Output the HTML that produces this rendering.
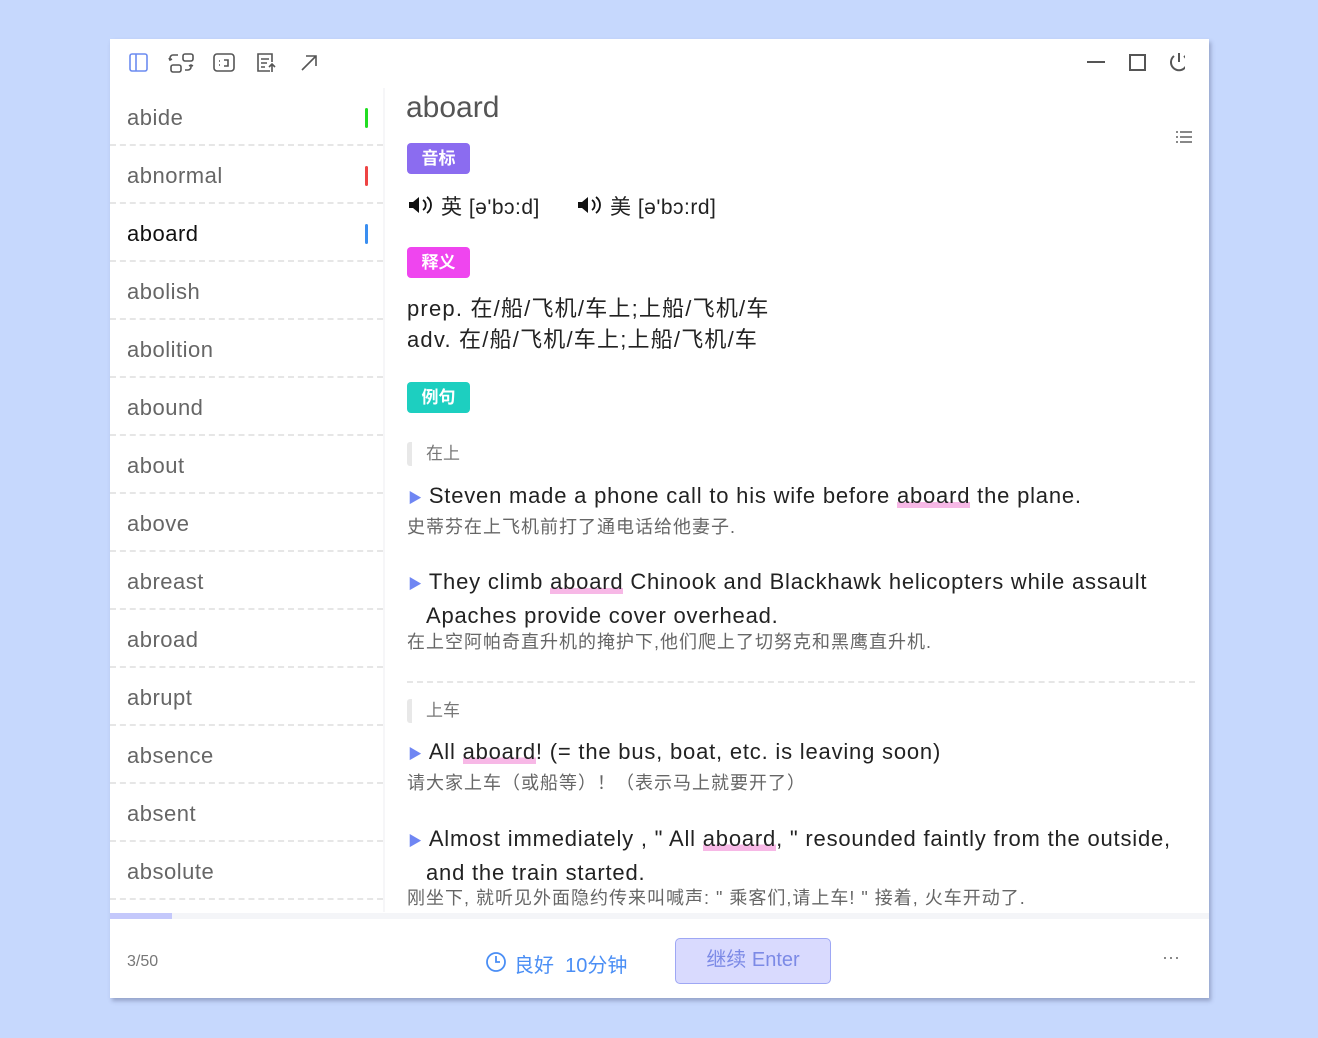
<!DOCTYPE html>
<html><head><meta charset="utf-8"><style>
*{margin:0;padding:0;box-sizing:border-box}
body{width:1318px;height:1038px;background:#c6d8fd;font-family:"Liberation Sans","Noto Sans CJK SC",sans-serif;position:relative;overflow:hidden}
.win{position:absolute;left:110px;top:39px;width:1099px;height:959px;background:#fff;box-shadow:2px 3px 4px rgba(90,100,140,.45)}
.a{position:absolute;white-space:nowrap}
.row{position:absolute;left:0;width:273px;height:58px;border-bottom:2px dashed #e6e6e6}
.row span{position:absolute;left:17px;top:17px;font-size:22px;color:#666;letter-spacing:0.5px}
.row i{position:absolute;left:255px;top:20px;width:3px;height:20px;border-radius:2px}
.badge{position:absolute;left:297px;width:63px;height:31px;border-radius:4px;color:#fff;font-size:17px;font-weight:bold;text-align:center;line-height:31px}
.en{font-size:22px;color:#222;letter-spacing:0.8px}
.zh{font-size:18px;color:#666;letter-spacing:1px}
.hl{background:linear-gradient(transparent 75%,#f7b8e6 75%)}
.tri{color:#6f86f3;font-size:14px;margin-right:6px}
.tag{position:absolute;left:297px;height:24px;border-left:5px solid #e8e8e8;border-radius:3px;padding-left:14px;font-size:17px;color:#777;line-height:24px}
.def{font-size:22px;color:#222;letter-spacing:1.2px}
</style></head><body>
<div class="win">
<svg class="a" style="left:18px;top:12px" width="200" height="24" fill="none" stroke-width="1.6">
<rect x="2" y="3" width="17" height="17" rx="2" stroke="#6c8cf0"/><line x1="8" y1="3" x2="8" y2="20" stroke="#6c8cf0"/>
<g stroke="#555"><rect x="55" y="3" width="10" height="7" rx="2"/><rect x="43" y="14" width="10" height="7" rx="2"/><path d="M50 4 h-5 a3 3 0 0 0 -3 3 v2 M41 7 l1 2 l2 -1"/><path d="M57 19 h3 a3 3 0 0 0 3 -3 v-2 M65 15 l-2 -1 l-2 1"/>
<rect x="86" y="3" width="20" height="17" rx="3"/><path d="M91 10 h1 M91 14 h1 M96 9 h4 v6 h-4"/>
<path d="M142 20 h-12 v-17 h14 v8 M133 8 h8 M133 12 h6 M133 16 h4 M144 21 v-8 M141 16 l3 -3 l3 3"/>
<path d="M174 19 l14 -14 M178 5 h10 v10"/></g></svg>
<svg class="a" style="left:975px;top:12px" width="100" height="24" fill="none" stroke="#555" stroke-width="2">
<line x1="2" y1="11" x2="20" y2="11"/><rect x="45" y="4" width="15" height="15"/>
<path d="M94 2 v9 M89 5 a8 8 0 1 0 10 0"/></svg>
<svg class="a" style="left:1066px;top:91px" width="16" height="14" fill="#888"><rect x="0" y="1" width="2" height="2"/><rect x="4" y="1" width="12" height="2"/><rect x="0" y="6" width="2" height="2"/><rect x="4" y="6" width="12" height="2"/><rect x="0" y="11" width="2" height="2"/><rect x="4" y="11" width="12" height="2"/></svg>
<div class="a" style="left:0;top:49px;width:273px;height:820px;overflow:hidden">
<div class="row" style="top:0"><span>abide</span><i style="background:#22dd22"></i></div>
<div class="row" style="top:58px"><span>abnormal</span><i style="background:#ee4444"></i></div>
<div class="row" style="top:116px"><span style="color:#111">aboard</span><i style="background:#3a8ef0"></i></div>
<div class="row" style="top:174px"><span>abolish</span></div>
<div class="row" style="top:232px"><span>abolition</span></div>
<div class="row" style="top:290px"><span>abound</span></div>
<div class="row" style="top:348px"><span>about</span></div>
<div class="row" style="top:406px"><span>above</span></div>
<div class="row" style="top:464px"><span>abreast</span></div>
<div class="row" style="top:522px"><span>abroad</span></div>
<div class="row" style="top:580px"><span>abrupt</span></div>
<div class="row" style="top:638px"><span>absence</span></div>
<div class="row" style="top:696px"><span>absent</span></div>
<div class="row" style="top:754px"><span>absolute</span></div>
</div>
<div class="a" style="left:273px;top:49px;width:2px;height:824px;background:#f6f6f8"></div>
<div class="a" style="left:296px;top:52px;font-size:30px;color:#555">aboard</div>
<div class="badge" style="top:104px;background:#8b6cf0">音标</div>
<svg class="a" style="left:298px;top:156px" width="26" height="20"><path d="M1 7 h4 l6 -5 v16 l-6 -5 h-4z" fill="#111"/><path d="M15 5 a6 6 0 0 1 0 10 M19 2 a10 10 0 0 1 0 16" fill="none" stroke="#111" stroke-width="1.8"/></svg>
<div class="a" style="left:331px;top:152px;font-size:21px;color:#222;letter-spacing:0.5px">英 [ə'bɔ:d]</div>
<svg class="a" style="left:467px;top:156px" width="26" height="20"><path d="M1 7 h4 l6 -5 v16 l-6 -5 h-4z" fill="#111"/><path d="M15 5 a6 6 0 0 1 0 10 M19 2 a10 10 0 0 1 0 16" fill="none" stroke="#111" stroke-width="1.8"/></svg>
<div class="a" style="left:500px;top:152px;font-size:21px;color:#222;letter-spacing:0.5px">美 [ə'bɔ:rd]</div>
<div class="badge" style="top:208px;background:#ef45ef">释义</div>
<div class="a def" style="left:297px;top:252px">prep. 在/船/飞机/车上;上船/飞机/车</div>
<div class="a def" style="left:297px;top:283px">adv. 在/船/飞机/车上;上船/飞机/车</div>
<div class="badge" style="top:343px;background:#1dcfc0">例句</div>
<div class="tag" style="top:403px">在上</div>
<div class="a en" style="left:298px;top:444px"><span class="tri">▶</span>Steven made a phone call to his wife before <span class="hl">aboard</span> the plane.</div>
<div class="a zh" style="left:297px;top:474px">史蒂芬在上飞机前打了通电话给他妻子.</div>
<div class="a en" style="left:298px;top:527px;line-height:31px"><span class="tri">▶</span>They climb <span class="hl">aboard</span> Chinook and Blackhawk helicopters while assault<br><span style="padding-left:18px">Apaches provide cover overhead.</span></div>
<div class="a zh" style="left:297px;top:589px">在上空阿帕奇直升机的掩护下,他们爬上了切努克和黑鹰直升机.</div>
<div class="a" style="left:297px;top:642px;width:788px;border-top:2px dashed #e6e6e6"></div>
<div class="tag" style="top:660px">上车</div>
<div class="a en" style="left:298px;top:700px"><span class="tri">▶</span>All <span class="hl">aboard</span>! (= the bus, boat, etc. is leaving soon)</div>
<div class="a zh" style="left:297px;top:730px">请大家上车（或船等）！（表示马上就要开了）</div>
<div class="a en" style="left:298px;top:784px;line-height:31px"><span class="tri">▶</span>Almost immediately , " All <span class="hl">aboard</span>, " resounded faintly from the outside,<br><span style="padding-left:18px">and the train started.</span></div>
<div class="a zh" style="left:297px;top:845px">刚坐下, 就听见外面隐约传来叫喊声: " 乘客们,请上车! " 接着, 火车开动了.</div>
<div class="a" style="left:0;top:874px;width:1099px;height:6px;background:#f4f5f8"></div>
<div class="a" style="left:0;top:874px;width:62px;height:6px;background:#c4c8fb"></div>
<div class="a" style="left:17px;top:914px;font-size:16px;color:#777">3/50</div>
<svg class="a" style="left:375px;top:912px" width="22" height="22" fill="none" stroke="#4a8ef5" stroke-width="1.8"><circle cx="11" cy="11" r="9"/><path d="M11 5 v6 h4"/></svg>
<div class="a" style="left:404px;top:910px;font-size:20px;color:#4a8ef5">良好&nbsp;&nbsp;10分钟</div>
<div class="a" style="left:565px;top:899px;width:156px;height:46px;background:#d9dafe;border:1.5px solid #9ea7f4;border-radius:5px;text-align:center;line-height:43px;font-size:20px;color:#7c8ae6">继续 Enter</div>
<div class="a" style="left:1052px;top:908px;font-size:18px;color:#777">···</div>
</div>
</body></html>
